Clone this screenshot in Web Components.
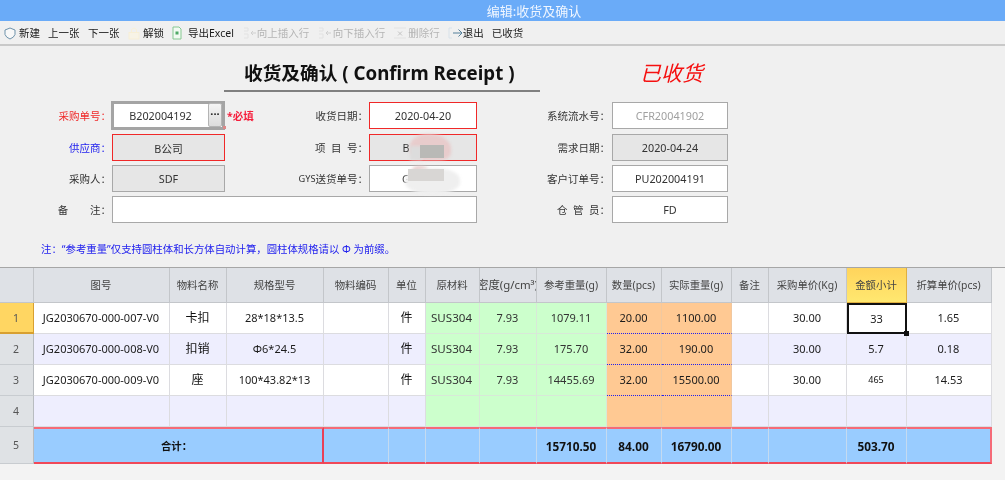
<!DOCTYPE html>
<html lang="zh"><head><meta charset="utf-8">
<style>
html,body{margin:0;padding:0;background:#f3f3f3;overflow:hidden}
body{font-family:"Noto Sans","Noto Sans CJK SC",sans-serif;width:1005px;height:480px}
</style></head>
<body>
<erp-window>
  <erp-titlebar>编辑:收货及确认</erp-titlebar>
  <erp-toolbar></erp-toolbar>
  <erp-form></erp-form>
  <erp-grid></erp-grid>
</erp-window>
<script>
function comp(name, css, html, onConnect){
  customElements.define(name, class extends HTMLElement{
    constructor(){super();const s=this.attachShadow({mode:'open'});
      s.innerHTML='<style>'+css+'</style>'+html;}
    connectedCallback(){ if(onConnect) onConnect(this.shadowRoot,this); }
  });
}
const CJK='"Noto Sans","Noto Sans CJK SC",sans-serif';
comp('erp-window',`:host{display:block;width:1005px;height:480px;background:#f3f3f3;filter:blur(.3px);font-family:${CJK}}`,'<slot></slot>');
comp('erp-titlebar',`:host{display:flex;align-items:center;justify-content:center;height:21px;background:#6aabf8;color:#f0f6ff;font-size:13px;padding-left:63px;box-sizing:border-box}`,'<slot></slot>');

const icons={
 shield:'<svg width="12" height="13" viewBox="0 0 12 13"><path d="M6 1 L11 3 V7.5 Q10 10.5 6 12 Q2 10.5 1 7.5 V3 Z" fill="#fff" fill-opacity=".5" stroke="#6f93ab" stroke-width="1"/></svg>',
 lock:'<svg width="12" height="14" viewBox="0 0 12 14"><path d="M3.5 6 V3.5 Q6 .5 8.5 3.5 V6" fill="none" stroke="#f8f0d8" stroke-width="1"/><rect x="1" y="6.5" width="10" height="6.5" fill="#f7f3e6" stroke="#f8eed2" stroke-width=".8"/></svg>',
 excel:'<svg width="10" height="14" viewBox="0 0 10 14"><path d="M1 1 H7 L9 3 V13 H1 Z" fill="#f2faf2" stroke="#86c892"/><rect x="3.5" y="5.5" width="3" height="3" fill="#4fa866"/></svg>',
 insUp:'<svg width="14" height="14" viewBox="0 0 14 14"><path d="M1 2 H5 M5 2 V5 M1 5 H5 M1 8 H5 V12 H1" fill="none" stroke="#e2e2e2"/><path d="M13 7 H8 M10 5 L8 7 L10 9" fill="none" stroke="#d0d0d0"/></svg>',
 del:'<svg width="14" height="14" viewBox="0 0 14 14"><path d="M1 2 H13 M1 12 H13" stroke="#e2e2e2" stroke-width="1.2"/><path d="M5 5.5 L9 9.5 M9 5.5 L5 9.5" stroke="#c4c4c4"/></svg>',
 exit:'<svg width="16" height="14" viewBox="0 0 16 14"><path d="M4 2 H1 V12 H4" fill="none" stroke="#d8e2ea"/><path d="M5 7 H14 M10.5 3.5 L14 7 L10.5 10.5" fill="none" stroke="#55809b" stroke-width="1"/></svg>'
};
comp('erp-tool',`:host{display:inline-flex;align-items:center;font-size:10.5px;color:#1a1a1a;white-space:nowrap;line-height:1}
:host([off]){color:#b4b4b4}
span{display:inline-flex;align-items:center;justify-content:center}`,
'<span id="i"></span><slot></slot>',(s,h)=>{
  const i=s.getElementById('i');const n=h.getAttribute('icon');
  if(n){i.innerHTML=icons[n];i.style.marginRight=(h.getAttribute('g')||'3')+'px';}else i.remove();
});
const tools=[['shield','新建',0,4,3],[null,'上一张',0,8],[null,'下一张',0,8.5],['lock','解锁',0,8.5,3],['excel','导出Excel',0,8,6],
['insUp','向上插入行',1,9,0],['insUp','向下插入行',1,8.5,1],['del','删除行',1,8,1],['exit','退出',0,8,-1],[null,'已收货',0,8]];
comp('erp-toolbar',`:host{display:flex;align-items:center;height:25px;box-sizing:border-box;background:#f0f0f0;border-bottom:2px solid #c9c9c9;padding-top:1px}`,
 tools.map(t=>`<erp-tool ${t[0]?`icon="${t[0]}"`:''} ${t[2]?'off':''} g="${t[4]??3}" style="margin-left:${t[3]}px">${t[1]}</erp-tool>`).join(''));

comp('erp-field',`:host{display:flex;align-items:center;justify-content:center;box-sizing:border-box;height:27px;border:1px solid #a8a8a8;background:#fff;color:#333;font-size:10.8px;position:relative;overflow:visible}
:host([red]){border-color:#f02828}
:host([ro]){background:#e6e6e6}
:host([muted]){color:#a0a0a0}
:host([span]){grid-column:2/5}`,'<slot></slot>');
comp('erp-label',`:host{display:flex;align-items:center;justify-content:flex-end;height:27px;font-size:10.5px;color:#333;padding-right:1px;white-space:pre}
:host([c=r]){color:#f02828}:host([c=b]){color:#2222ee}:host([c3]){padding-right:2px}`,'<slot></slot>');
comp('erp-lookup',`:host{display:flex;align-items:center;height:27px;position:relative;font-size:10.8px}
.w{width:115px;height:29px;margin-left:-1px;margin-top:-1px;box-sizing:border-box;border:3px solid #a4a4a4;background:#fff;display:flex;align-items:center;color:#333}
.v{flex:1;text-align:center;padding-right:1px}
.b{width:14px;height:24px;box-sizing:border-box;border:1px solid #b4b4b4;border-radius:2px;background:linear-gradient(#f4f4f4,#dcdcdc);display:flex;align-items:center;justify-content:center;font-weight:700;font-size:11px;line-height:1;color:#222;padding-bottom:3px}
.req{position:absolute;left:115px;top:7px;color:#f51e3c;font-weight:700;white-space:nowrap;line-height:14px;font-size:10.5px}
.g{position:absolute;left:111px;top:24px;width:3px;height:3px;background:#d88}`,
'<div class="w"><div class="v"><slot></slot></div><div class="b">···</div></div><span class="req">*必填</span><i class="g"></i>');

comp('erp-form',`:host{display:block;height:221px;background:#f0f0f0;position:relative;box-sizing:border-box;padding-top:14px}
.head{display:flex;height:32px;box-sizing:border-box}
h1{margin:0 0 0 224px;width:316px;height:32px;box-sizing:border-box;border-bottom:2px solid #808080;font-size:18.7px;font-weight:700;line-height:26px;color:#111;white-space:nowrap;padding-left:20px}
.st{margin-left:100px;font-style:italic;color:#f51010;font-size:21px;line-height:27px;font-weight:400}
.g{display:grid;grid-template-columns:112px 113px 144px 108px 135px 116px;grid-template-rows:32px 31px 31px 27px;margin-top:10px;width:728px}
.note{margin:19px 0 0 41px;color:#2222ee;font-size:10.4px;line-height:14px;white-space:nowrap}
.gys{font-size:9.2px}
.blob{position:absolute;pointer-events:none;filter:blur(1.5px)}`,
`<div class="head"><h1>收货及确认 ( Confirm Receipt )</h1><div class="st">已收货</div></div>
<div class="g">
 <erp-label c="r">采购单号：</erp-label><erp-lookup>B202004192</erp-lookup><erp-label>收货日期：</erp-label><erp-field red>2020-04-20</erp-field><erp-label c3>系统流水号：</erp-label><erp-field muted>CFR20041902</erp-field>
 <erp-label c="b">供应商：</erp-label><erp-field red ro>B公司</erp-field><erp-label>项  目  号：</erp-label><erp-field red ro><span style="margin-right:34px">B</span></erp-field><erp-label c3>需求日期：</erp-label><erp-field ro>2020-04-24</erp-field>
 <erp-label>采购人：</erp-label><erp-field ro>SDF</erp-field><erp-label><span class="gys">GYS</span>送货单号：</erp-label><erp-field><span style="margin-right:34px">G</span></erp-field><erp-label c3>客户订单号：</erp-label><erp-field>PU202004191</erp-field>
 <erp-label>备        注：</erp-label><erp-field span></erp-field><erp-label c3 style="grid-column:5">仓  管  员：</erp-label><erp-field>FD</erp-field>
</div>
<div class="note">注：“参考重量”仅支持圆柱体和长方体自动计算，圆柱体规格请以 Φ 为前缀。</div>
<div class="blob" style="left:410px;top:88px;width:41px;height:26px;border-radius:50% 60% 30% 40%;background:#e8cccc"></div>
<div class="blob" style="left:410px;top:100px;width:12px;height:14px;background:#dcdcdc"></div>
<div class="blob" style="left:420px;top:99px;width:24px;height:13px;background:#b9b9b6;filter:none"></div>
<div class="blob" style="left:412px;top:120px;width:16px;height:6px;border-radius:50%;background:#e8cccc"></div>
<div class="blob" style="left:405px;top:122px;width:55px;height:26px;border-radius:45%;background:#efefef"></div>
<div class="blob" style="left:408px;top:123px;width:36px;height:12px;background:#d8d6d4;filter:none"></div>`);

const cols=[34,136,57,97,65,37,54,57,70,55,70,37,78,60,85];
const heads=['','图号','物料名称','规格型号','物料编码','单位','原材料','密度(g/cm³)','参考重量(g)','数量(pcs)','实际重量(g)','备注','采购单价(Kg)','金额小计','折算单价(pcs)'];
const rows=[
['JG2030670-000-007-V0','卡扣','28*18*13.5','','件','SUS304','7.93','1079.11','20.00','1100.00','','30.00','33','1.65'],
['JG2030670-000-008-V0','扣销','Φ6*24.5','','件','SUS304','7.93','175.70','32.00','190.00','','30.00','5.7','0.18'],
['JG2030670-000-009-V0','座','100*43.82*13','','件','SUS304','7.93','14455.69','32.00','15500.00','','30.00','465','14.53'],
['','','','','','','','','','','','','','']];
let t='<table><colgroup>'+cols.map(c=>`<col style="width:${c}px">`).join('')+'</colgroup>';
t+='<tr class="hd">'+heads.map((h,i)=>`<th class="${i==13?'act':''} ${i==7?'wide':''}"><div>${h}</div></th>`).join('')+'</tr>';
rows.forEach((r,ri)=>{
  t+=`<tr class="${ri%2?'alt':''}" style="height:31px"><th class="rh ${ri==0?'sel':''}">${ri+1}</th>`;
  r.forEach((v,i)=>{const c=i+1;let k=[];
    if(c==6||c==7||c==8)k.push('gr'); if(c==9||c==10)k.push('or'); if((c==9||c==10)&&ri<3)k.push('dot');
    if(c==2||c==5)k.push('big'); if(c==6)k.push('lft'); if(ri==0&&c==13)k.push('cur'); if(ri==2&&c==13)k.push('sm');
    t+=`<td class="${k.join(' ')}">${v}${ri==0&&c==13?'<i></i>':''}</td>`;});
  t+='</tr>';
});
t+=`<tr class="tot"><th class="rh">5</th><td colspan="3" class="sum"><span>合计：</span></td>`+
 ['','','','','15710.50','84.00','16790.00','','','503.70',''].map(v=>`<td>${v}</td>`).join('')+'</tr></table>';
comp('erp-grid',`:host{display:block;height:214px;background:#f3f3f3;border-top:1px solid #a6a6a6;box-sizing:border-box;font-size:11px;color:#1c1c1c}
table{border-collapse:separate;border-spacing:0;table-layout:fixed;width:992px}
th,td{box-sizing:border-box;padding:0 1px 0 0;text-align:center;font-weight:400;border-right:1px solid #dcdce0;border-bottom:1px solid #dcdce0;overflow:hidden;white-space:nowrap;line-height:14px}
tr{background:#fff}tr.alt{background:#eeeefe}
.hd{height:35px}
.hd th{background:#dee1e6;border-right:1.5px solid #c3c6ca;border-bottom:1px solid #c3c6ca;color:#444;font-size:10.4px;padding:0}
.hd th div{display:flex;justify-content:center;white-space:nowrap;padding-right:1px}
.hd th.wide{font-size:11.4px}
.hd th.act{background:linear-gradient(#ffd45c,#ffe870);border-color:#e0b040;color:#444}
th.rh{background:#dfe2e5;border-right:1px solid #b8bcc0;border-bottom:1px solid #c8ccd0;color:#555;font-size:10.5px}
th.rh.sel{background:#ffd662;border-right-color:#d8a030;border-bottom:2px solid #d8a030}
td.gr{background:#ccffcc;color:#333;border-color:#d8e8d8}
td.or{background:#ffc993;border-color:#f0c8a0}
td.dot{border-bottom:1px dotted #2020ee}
td.big{font-size:12px;color:#111}
td.lft{text-align:left;padding-left:5px;font-size:11.6px}
td.sm{font-size:9px;color:#111}
td.cur{position:relative;overflow:visible;border:2.5px solid #111}
td.cur i{position:absolute;right:-4px;bottom:-4px;width:5px;height:5px;background:#111}
.tot{height:37px;font-weight:700}
.tot td{background:#99ccff;font-weight:700;font-size:11.8px;color:#111;border-top:2px solid #f56a78;border-bottom:2px solid #f04858;border-right:1px solid #c4daf0}
.tot td:last-child{border-right:2px solid #f56a78}
.tot th{border-bottom:1px solid #c8ccd0;height:37px}
.tot td.sum{border-right:2px solid #e84058;font-size:10.4px}
.sum span{margin-right:2px}`,t);
</script>
</body></html>
